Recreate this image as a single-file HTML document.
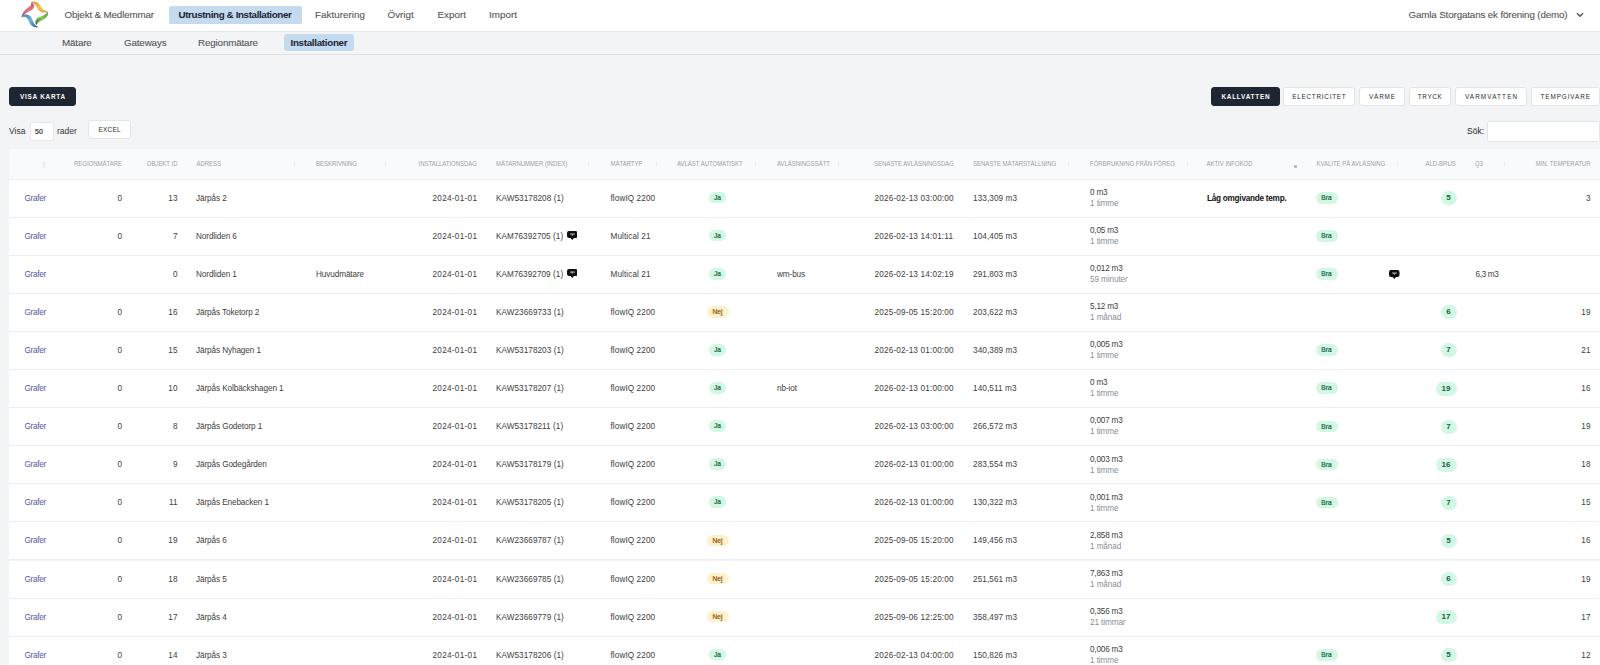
<!DOCTYPE html>
<html><head><meta charset="utf-8"><title>Installationer</title>
<style>
*{box-sizing:border-box;margin:0;padding:0}
html,body{width:1600px;height:665px;overflow:hidden;background:#f3f4f6;font-family:"Liberation Sans",sans-serif;color:#222}
.a{position:absolute;white-space:nowrap}
#top{position:absolute;left:0;top:0;width:1600px;height:32px;background:#fff;border-bottom:1px solid #e6e8eb}
#sub{position:absolute;left:0;top:32px;width:1600px;height:22.7px;background:#f3f4f6;border-bottom:1px solid #dfe2e6}
#subl{position:absolute;left:0;top:50.5px;width:1600px;height:1px;background:#f7f8f9}
.logo{position:absolute;left:16px;top:0px}
.nav{position:absolute;white-space:nowrap;font-size:9.8px;line-height:10px;color:#555;letter-spacing:-0.14px;-webkit-text-stroke:0.1px #555}
.pill{position:absolute;background:#c3daef;border-radius:2px}
.btn{position:absolute;height:19px;border-radius:3px;background:#fff;border:1px solid #e3e5e9;font-size:6.4px;line-height:17px;text-align:center;letter-spacing:0.9px;color:#2b2b2b;white-space:nowrap}
.btn.dk{background:#1e2533;border-color:#1e2533;color:#fff;font-weight:bold}
.lbl{position:absolute;white-space:nowrap;font-size:8.5px;line-height:10px;color:#333}
#thead{position:absolute;left:8.5px;top:149.0px;width:1600px;height:30.69999999999999px;background:#f9fafb;border-bottom:1px solid #eceef1}
.h{position:absolute;top:160.8px;white-space:nowrap;font-size:6px;line-height:7px;color:#9c9fa4;letter-spacing:-0.02px;transform:scaleY(1.2);transform-origin:0 50%}
.dv{position:absolute;top:160.5px;width:1px;height:6.5px;background:#eceef0}
.row{position:absolute;left:8.5px;width:1600px;height:38.08px;background:#fff;border-bottom:1px solid #eceef1}
.c{position:absolute;white-space:nowrap;font-size:8.2px;line-height:10px;color:#404040}
.c.dg{letter-spacing:0.35px}
.c.link{color:#5858a8}
.c.sub{color:#8a8f96}
.c.b{font-weight:bold;color:#111}
.bdg{position:absolute;height:11.5px;border-radius:6px;font-size:6.6px;line-height:11.5px;text-align:center;white-space:nowrap;-webkit-text-stroke:0.2px currentColor}
.bdg.g{background:#d3f7e5;color:#17603b}
.bdg.y{background:#fdf1c9;color:#8a4f12}
.bdg.n{height:14px;line-height:14px;border-radius:7px;font-size:8px;font-weight:bold;-webkit-text-stroke:0}
.ic{position:absolute}
.srt{position:absolute;top:160.5px;width:1.5px;height:7px;background:#ebedf0}
.srt2{position:absolute;top:165px;width:3px;height:3px;background:#b0b4ba;border-radius:1px}
</style></head><body>
<div id="top"></div>
<svg class="logo" width="36" height="31" viewBox="0 0 36 31">
<defs>
<linearGradient id="gr" x1="0" y1="1" x2="1" y2="0"><stop offset="0" stop-color="#a8455a"/><stop offset="0.5" stop-color="#e06a78"/><stop offset="1" stop-color="#c24a5c"/></linearGradient>
<linearGradient id="gy" x1="0" y1="0" x2="1" y2="1"><stop offset="0" stop-color="#d9883a"/><stop offset="0.5" stop-color="#f0c040"/><stop offset="1" stop-color="#e0902e"/></linearGradient>
<linearGradient id="gg" x1="1" y1="0" x2="0" y2="1"><stop offset="0" stop-color="#3f8f35"/><stop offset="0.5" stop-color="#7cc043"/><stop offset="1" stop-color="#1d6a28"/></linearGradient>
<linearGradient id="gb" x1="0" y1="0" x2="1" y2="1"><stop offset="0" stop-color="#3b6fa8"/><stop offset="0.5" stop-color="#5ab0de"/><stop offset="1" stop-color="#2a3f80"/></linearGradient>
</defs>
<g opacity="0.92">
<path d="M6.08 17.70 L6.88 16.40 L7.67 15.32 L8.49 14.41 L9.34 13.64 L10.21 12.99 L11.09 12.43 L11.98 11.92 L12.86 11.46 L13.73 11.02 L14.58 10.59 L15.40 10.13 L16.21 9.59 L16.86 8.98 L17.36 8.30 L17.71 7.56 L17.91 6.80 L17.97 6.04 L17.91 5.32 L17.74 4.63 L17.48 3.99 L17.13 3.42 L16.71 2.91 L16.22 2.50 L15.65 2.23 L15.15 2.57 L15.13 3.14 L15.11 3.63 L15.06 4.09 L14.98 4.51 L14.87 4.90 L14.74 5.23 L14.59 5.52 L14.43 5.76 L14.27 5.96 L14.12 6.12 L13.96 6.27 L13.79 6.41 L13.26 6.77 L12.56 7.24 L11.77 7.78 L10.90 8.40 L10.01 9.12 L9.11 9.95 L8.24 10.89 L7.43 11.96 L6.72 13.15 L6.13 14.47 L5.70 15.93 L5.52 17.50Z" fill="url(#gr)"/>
<path d="M15.39 2.60 L16.34 2.96 L17.14 3.30 L17.83 3.69 L18.42 4.11 L18.92 4.55 L19.36 5.02 L19.75 5.51 L20.10 6.03 L20.44 6.57 L20.76 7.15 L21.07 7.77 L21.42 8.51 L21.87 9.32 L22.43 10.09 L23.09 10.76 L23.82 11.34 L24.63 11.80 L25.49 12.15 L26.39 12.38 L27.33 12.52 L28.32 12.57 L29.35 12.55 L30.43 12.44 L31.58 12.20 L31.62 11.60 L30.56 11.18 L29.61 10.81 L28.77 10.45 L28.04 10.07 L27.43 9.69 L26.91 9.30 L26.49 8.92 L26.13 8.54 L25.83 8.14 L25.54 7.72 L25.27 7.26 L24.98 6.69 L24.59 5.91 L24.08 5.09 L23.49 4.33 L22.83 3.63 L22.08 3.00 L21.27 2.48 L20.38 2.06 L19.45 1.77 L18.47 1.61 L17.46 1.58 L16.44 1.69 L15.41 2.00Z" fill="url(#gy)"/>
<path d="M31.51 12.12 L30.94 12.94 L30.39 13.59 L29.81 14.12 L29.20 14.56 L28.56 14.94 L27.88 15.28 L27.16 15.60 L26.42 15.90 L25.64 16.20 L24.83 16.51 L24.02 16.83 L23.15 17.19 L22.36 17.61 L21.63 18.10 L20.98 18.67 L20.43 19.29 L19.99 19.97 L19.65 20.69 L19.44 21.43 L19.36 22.19 L19.41 22.92 L19.57 23.63 L19.86 24.29 L20.31 24.86 L20.89 24.74 L21.12 24.13 L21.33 23.63 L21.56 23.20 L21.83 22.85 L22.10 22.55 L22.40 22.29 L22.71 22.04 L23.05 21.81 L23.42 21.57 L23.84 21.32 L24.31 21.07 L24.85 20.81 L25.61 20.47 L26.43 20.07 L27.28 19.62 L28.12 19.11 L28.94 18.53 L29.72 17.87 L30.44 17.13 L31.07 16.30 L31.58 15.39 L31.94 14.40 L32.14 13.36 L32.09 12.28Z" fill="url(#gg)"/>
<path d="M6.12 16.87 L7.09 16.81 L7.93 16.82 L8.67 16.93 L9.32 17.12 L9.90 17.37 L10.39 17.67 L10.82 18.01 L11.20 18.39 L11.53 18.80 L11.83 19.24 L12.09 19.73 L12.34 20.33 L12.64 21.17 L13.07 22.11 L13.59 23.02 L14.19 23.91 L14.88 24.73 L15.66 25.48 L16.53 26.14 L17.48 26.68 L18.49 27.08 L19.56 27.32 L20.66 27.38 L21.76 27.20 L21.84 26.60 L20.92 26.14 L20.15 25.67 L19.50 25.15 L18.94 24.58 L18.45 23.98 L18.01 23.34 L17.62 22.67 L17.26 21.97 L16.93 21.24 L16.63 20.50 L16.36 19.74 L16.06 18.87 L15.62 17.89 L15.01 16.97 L14.28 16.18 L13.44 15.52 L12.51 15.03 L11.53 14.70 L10.52 14.55 L9.51 14.57 L8.51 14.76 L7.55 15.11 L6.66 15.62 L5.88 16.33Z" fill="url(#gb)"/>
</g>
</svg>
<div class="nav" style="left:64.5px;top:9.7px">Objekt &amp; Medlemmar</div>
<div class="pill" style="left:169px;top:6.4px;width:132.5px;height:17.2px"></div>
<div class="nav" style="left:178.5px;top:9.7px;color:#1a2233;font-weight:bold;-webkit-text-stroke:0;letter-spacing:-0.375px">Utrustning &amp; Installationer</div>
<div class="nav" style="left:315px;top:9.7px;letter-spacing:0.03px">Fakturering</div>
<div class="nav" style="left:387.5px;top:9.7px;letter-spacing:0.03px">Övrigt</div>
<div class="nav" style="left:437.5px;top:9.7px;letter-spacing:0.03px">Export</div>
<div class="nav" style="left:489px;top:9.7px;letter-spacing:0.03px">Import</div>
<div class="nav" style="right:32.5px;top:9.7px">Gamla Storgatans ek förening (demo)</div>
<svg class="a" style="left:1575.5px;top:12px" width="8" height="6" viewBox="0 0 8 6"><path d="M1 1.2L4 4.2L7 1.2" stroke="#555" stroke-width="1.4" fill="none"/></svg>
<div id="sub"></div><div id="subl"></div>
<div class="nav" style="left:62px;top:38.2px">Mätare</div>
<div class="nav" style="left:124px;top:38.2px">Gateways</div>
<div class="nav" style="left:198px;top:38.2px">Regionmätare</div>
<div class="pill" style="left:283.5px;top:34px;width:70px;height:17px;border-radius:3px"></div>
<div class="nav" style="left:290.5px;top:38.2px;color:#1a2233;font-weight:bold;-webkit-text-stroke:0;letter-spacing:-0.3px">Installationer</div>

<div class="btn dk" style="left:9px;top:87px;width:67px;letter-spacing:0.75px;text-indent:0.75px">VISA KARTA</div>
<div class="btn dk" style="left:1211px;top:87px;width:69px;letter-spacing:0.78px;text-indent:0.78px">KALLVATTEN</div>
<div class="btn" style="left:1283px;top:87px;width:72px;letter-spacing:0.74px;text-indent:0.74px">ELECTRICITET</div>
<div class="btn" style="left:1359px;top:87px;width:46px;letter-spacing:0.85px;text-indent:0.85px">VÄRME</div>
<div class="btn" style="left:1408.5px;top:87px;width:42.5px;letter-spacing:0.58px;text-indent:0.58px">TRYCK</div>
<div class="btn" style="left:1455px;top:87px;width:72px;letter-spacing:1.11px;text-indent:1.11px">VARMVATTEN</div>
<div class="btn" style="left:1530.5px;top:87px;width:69.5px;letter-spacing:0.88px;text-indent:0.88px">TEMPGIVARE</div>

<div class="lbl" style="left:9px;top:125.5px">Visa</div>
<div class="a" style="left:29.5px;top:121.5px;width:24.5px;height:19px;background:#fff;border:1px solid #e6e8eb;border-radius:3px;font-size:7px;line-height:17px;padding-left:4.5px;color:#333;-webkit-text-stroke:0.2px #333">50</div>
<div class="lbl" style="left:57px;top:125.5px">rader</div>
<div class="btn" style="left:88px;top:120px;width:43px;letter-spacing:0.28px;text-indent:0.28px">EXCEL</div>
<div class="lbl" style="left:1467px;top:125.5px;color:#222">Sök:</div>
<div class="a" style="left:1486.5px;top:121px;width:113px;height:20.5px;background:#fff;border:1px solid #e3e5e9;border-radius:2px"></div>

<div id="thead"></div>
<div class="h" style="right:1478px">REGIONMÄTARE</div><div class="h" style="right:1422.5px">OBJEKT ID</div><div class="h" style="left:196.5px">ADRESS</div><div class="h" style="left:316px">BESKRIVNING</div><div class="h" style="right:1123px">INSTALLATIONSDAG</div><div class="h" style="left:496px">MÄTARNUMMER (INDEX)</div><div class="h" style="left:610.5px">MÄTARTYP</div><div class="h" style="left:677px">AVLÄST AUTOMATISKT</div><div class="h" style="left:777px">AVLÄSNINGSSÄTT</div><div class="h" style="left:874px">SENASTE AVLÄSNINGSDAG</div><div class="h" style="left:973px">SENASTE MÄTARSTÄLLNING</div><div class="h" style="left:1090px">FÖRBRUKNING FRÅN FÖREG</div><div class="h" style="left:1206.5px">AKTIV INFOKOD</div><div class="h" style="left:1316.5px">KVALITE PÅ AVLÄSNING</div><div class="h" style="left:1425.5px">ALD-BRUS</div><div class="h" style="left:1475px">Q3</div><div class="h" style="right:9.5px">MIN. TEMPERATUR</div><div class="dv" style="left:293.5px"></div><div class="dv" style="left:384.5px"></div><div class="dv" style="left:588.0px"></div><div class="dv" style="left:655.5px"></div><div class="dv" style="left:754.5px"></div><div class="dv" style="left:837.5px"></div><div class="dv" style="left:1068.0px"></div><div class="dv" style="left:1187.0px"></div><div class="dv" style="left:1396.5px"></div><div class="dv" style="left:1504.0px"></div><div class="srt" style="left:43px"></div><div class="srt2" style="left:1293.5px"></div>
<div class="row" style="top:179.70px"></div>
<div class="c link" style="left:24.5px;top:193.74px;letter-spacing:-0.3px">Grafer</div>
<div class="c" style="right:1477.95px;top:193.74px;letter-spacing:0.05px">0</div>
<div class="c" style="right:1422.45px;top:193.74px;letter-spacing:0.05px">13</div>
<div class="c" style="left:196px;top:193.74px;letter-spacing:-0.1px">Järpås 2</div>
<div class="c" style="right:1122.70px;top:193.74px;letter-spacing:0.3px">2024-01-01</div>
<div class="c" style="left:496px;top:193.74px;letter-spacing:0.05px">KAW53178208 (1)</div>
<div class="c" style="left:610.5px;top:193.74px;letter-spacing:0.09px">flowIQ 2200</div>
<div class="bdg g" style="left:709px;top:191.84px;width:17px">Ja</div>
<div class="c" style="left:874.5px;top:193.74px;letter-spacing:0.17px">2026-02-13 03:00:00</div>
<div class="c" style="left:973px;top:193.74px;letter-spacing:0.09px">133,309 m3</div>
<div class="c" style="left:1090px;top:187.94px;letter-spacing:-0.2px">0 m3</div>
<div class="c sub" style="left:1090px;top:198.94px;letter-spacing:-0.1px">1 timme</div>
<div class="c b" style="left:1207px;top:193.74px;letter-spacing:-0.25px">Låg omgivande temp.</div>
<div class="bdg g" style="left:1315.5px;top:192.04px;width:22px">Bra</div>
<div class="bdg g n" style="left:1440.5px;top:191.14px;width:16px">5</div>
<div class="c" style="right:9.45px;top:193.74px;letter-spacing:0.05px">3</div><div class="row" style="top:217.78px"></div>
<div class="c link" style="left:24.5px;top:231.82px;letter-spacing:-0.3px">Grafer</div>
<div class="c" style="right:1477.95px;top:231.82px;letter-spacing:0.05px">0</div>
<div class="c" style="right:1422.45px;top:231.82px;letter-spacing:0.05px">7</div>
<div class="c" style="left:196px;top:231.82px;letter-spacing:-0.1px">Nordliden 6</div>
<div class="c" style="right:1122.70px;top:231.82px;letter-spacing:0.3px">2024-01-01</div>
<div class="c" style="left:496px;top:231.82px;letter-spacing:0.05px">KAM76392705 (1)</div>
<svg class="ic" style="left:566.5px;top:231.02px" width="10.5" height="9" viewBox="0 0 10.5 9"><path d="M2 0H8.5A2 2 0 0 1 10.5 2V5A2 2 0 0 1 8.5 7H7L5.25 9L3.5 7H2A2 2 0 0 1 0 5V2A2 2 0 0 1 2 0Z" fill="#111"/><rect x="3.2" y="2.6" width="4.6" height="0.9" fill="#e8e8e8"/><rect x="4.8" y="3.5" width="0.9" height="1.1" fill="#e8e8e8"/></svg>
<div class="c" style="left:610.5px;top:231.82px;letter-spacing:0.09px">Multical 21</div>
<div class="bdg g" style="left:709px;top:229.92px;width:17px">Ja</div>
<div class="c" style="left:874.5px;top:231.82px;letter-spacing:0.17px">2026-02-13 14:01:11</div>
<div class="c" style="left:973px;top:231.82px;letter-spacing:0.09px">104,405 m3</div>
<div class="c" style="left:1090px;top:226.02px;letter-spacing:-0.2px">0,05 m3</div>
<div class="c sub" style="left:1090px;top:237.02px;letter-spacing:-0.1px">1 timme</div>
<div class="bdg g" style="left:1315.5px;top:230.12px;width:22px">Bra</div><div class="row" style="top:255.86px"></div>
<div class="c link" style="left:24.5px;top:269.90px;letter-spacing:-0.3px">Grafer</div>
<div class="c" style="right:1422.45px;top:269.90px;letter-spacing:0.05px">0</div>
<div class="c" style="left:196px;top:269.90px;letter-spacing:-0.1px">Nordliden 1</div>
<div class="c" style="left:316px;top:269.90px;letter-spacing:-0.1px">Huvudmätare</div>
<div class="c" style="right:1122.70px;top:269.90px;letter-spacing:0.3px">2024-01-01</div>
<div class="c" style="left:496px;top:269.90px;letter-spacing:0.05px">KAM76392709 (1)</div>
<svg class="ic" style="left:566.5px;top:269.1px" width="10.5" height="9" viewBox="0 0 10.5 9"><path d="M2 0H8.5A2 2 0 0 1 10.5 2V5A2 2 0 0 1 8.5 7H7L5.25 9L3.5 7H2A2 2 0 0 1 0 5V2A2 2 0 0 1 2 0Z" fill="#111"/><rect x="3.2" y="2.6" width="4.6" height="0.9" fill="#e8e8e8"/><rect x="4.8" y="3.5" width="0.9" height="1.1" fill="#e8e8e8"/></svg>
<div class="c" style="left:610.5px;top:269.90px;letter-spacing:0.09px">Multical 21</div>
<div class="bdg g" style="left:709px;top:268.00px;width:17px">Ja</div>
<div class="c" style="left:777px;top:269.90px;letter-spacing:-0.1px">wm-bus</div>
<div class="c" style="left:874.5px;top:269.90px;letter-spacing:0.17px">2026-02-13 14:02:19</div>
<div class="c" style="left:973px;top:269.90px;letter-spacing:0.09px">291,803 m3</div>
<div class="c" style="left:1090px;top:264.10px;letter-spacing:-0.2px">0,012 m3</div>
<div class="c sub" style="left:1090px;top:275.10px;letter-spacing:-0.1px">59 minuter</div>
<div class="bdg g" style="left:1315.5px;top:268.20px;width:22px">Bra</div>
<svg class="ic" style="left:1389px;top:270.4px" width="10.5" height="9" viewBox="0 0 10.5 9"><path d="M2 0H8.5A2 2 0 0 1 10.5 2V5A2 2 0 0 1 8.5 7H7L5.25 9L3.5 7H2A2 2 0 0 1 0 5V2A2 2 0 0 1 2 0Z" fill="#111"/><rect x="3.2" y="2.6" width="4.6" height="0.9" fill="#e8e8e8"/><rect x="4.8" y="3.5" width="0.9" height="1.1" fill="#e8e8e8"/></svg>
<div class="c" style="left:1475.5px;top:269.90px;letter-spacing:-0.33px">6,3 m3</div><div class="row" style="top:293.94px"></div>
<div class="c link" style="left:24.5px;top:307.98px;letter-spacing:-0.3px">Grafer</div>
<div class="c" style="right:1477.95px;top:307.98px;letter-spacing:0.05px">0</div>
<div class="c" style="right:1422.45px;top:307.98px;letter-spacing:0.05px">16</div>
<div class="c" style="left:196px;top:307.98px;letter-spacing:-0.1px">Järpås Toketorp 2</div>
<div class="c" style="right:1122.70px;top:307.98px;letter-spacing:0.3px">2024-01-01</div>
<div class="c" style="left:496px;top:307.98px;letter-spacing:0.05px">KAW23669733 (1)</div>
<div class="c" style="left:610.5px;top:307.98px;letter-spacing:0.09px">flowIQ 2200</div>
<div class="bdg y" style="left:706.5px;top:306.08px;width:22px">Nej</div>
<div class="c" style="left:874.5px;top:307.98px;letter-spacing:0.17px">2025-09-05 15:20:00</div>
<div class="c" style="left:973px;top:307.98px;letter-spacing:0.09px">203,622 m3</div>
<div class="c" style="left:1090px;top:302.18px;letter-spacing:-0.2px">5,12 m3</div>
<div class="c sub" style="left:1090px;top:313.18px;letter-spacing:-0.1px">1 månad</div>
<div class="bdg g n" style="left:1440.5px;top:305.38px;width:16px">6</div>
<div class="c" style="right:9.45px;top:307.98px;letter-spacing:0.05px">19</div><div class="row" style="top:332.02px"></div>
<div class="c link" style="left:24.5px;top:346.06px;letter-spacing:-0.3px">Grafer</div>
<div class="c" style="right:1477.95px;top:346.06px;letter-spacing:0.05px">0</div>
<div class="c" style="right:1422.45px;top:346.06px;letter-spacing:0.05px">15</div>
<div class="c" style="left:196px;top:346.06px;letter-spacing:-0.1px">Järpås Nyhagen 1</div>
<div class="c" style="right:1122.70px;top:346.06px;letter-spacing:0.3px">2024-01-01</div>
<div class="c" style="left:496px;top:346.06px;letter-spacing:0.05px">KAW53178203 (1)</div>
<div class="c" style="left:610.5px;top:346.06px;letter-spacing:0.09px">flowIQ 2200</div>
<div class="bdg g" style="left:709px;top:344.16px;width:17px">Ja</div>
<div class="c" style="left:874.5px;top:346.06px;letter-spacing:0.17px">2026-02-13 01:00:00</div>
<div class="c" style="left:973px;top:346.06px;letter-spacing:0.09px">340,389 m3</div>
<div class="c" style="left:1090px;top:340.26px;letter-spacing:-0.2px">0,005 m3</div>
<div class="c sub" style="left:1090px;top:351.26px;letter-spacing:-0.1px">1 timme</div>
<div class="bdg g" style="left:1315.5px;top:344.36px;width:22px">Bra</div>
<div class="bdg g n" style="left:1440.5px;top:343.46px;width:16px">7</div>
<div class="c" style="right:9.45px;top:346.06px;letter-spacing:0.05px">21</div><div class="row" style="top:370.10px"></div>
<div class="c link" style="left:24.5px;top:384.14px;letter-spacing:-0.3px">Grafer</div>
<div class="c" style="right:1477.95px;top:384.14px;letter-spacing:0.05px">0</div>
<div class="c" style="right:1422.45px;top:384.14px;letter-spacing:0.05px">10</div>
<div class="c" style="left:196px;top:384.14px;letter-spacing:-0.1px">Järpås Kolbäckshagen 1</div>
<div class="c" style="right:1122.70px;top:384.14px;letter-spacing:0.3px">2024-01-01</div>
<div class="c" style="left:496px;top:384.14px;letter-spacing:0.05px">KAW53178207 (1)</div>
<div class="c" style="left:610.5px;top:384.14px;letter-spacing:0.09px">flowIQ 2200</div>
<div class="bdg g" style="left:709px;top:382.24px;width:17px">Ja</div>
<div class="c" style="left:777px;top:384.14px;letter-spacing:-0.1px">nb-iot</div>
<div class="c" style="left:874.5px;top:384.14px;letter-spacing:0.17px">2026-02-13 01:00:00</div>
<div class="c" style="left:973px;top:384.14px;letter-spacing:0.09px">140,511 m3</div>
<div class="c" style="left:1090px;top:378.34px;letter-spacing:-0.2px">0 m3</div>
<div class="c sub" style="left:1090px;top:389.34px;letter-spacing:-0.1px">1 timme</div>
<div class="bdg g" style="left:1315.5px;top:382.44px;width:22px">Bra</div>
<div class="bdg g n" style="left:1435.5px;top:381.54px;width:21px">19</div>
<div class="c" style="right:9.45px;top:384.14px;letter-spacing:0.05px">16</div><div class="row" style="top:408.18px"></div>
<div class="c link" style="left:24.5px;top:422.22px;letter-spacing:-0.3px">Grafer</div>
<div class="c" style="right:1477.95px;top:422.22px;letter-spacing:0.05px">0</div>
<div class="c" style="right:1422.45px;top:422.22px;letter-spacing:0.05px">8</div>
<div class="c" style="left:196px;top:422.22px;letter-spacing:-0.1px">Järpås Godetorp 1</div>
<div class="c" style="right:1122.70px;top:422.22px;letter-spacing:0.3px">2024-01-01</div>
<div class="c" style="left:496px;top:422.22px;letter-spacing:0.05px">KAW53178211 (1)</div>
<div class="c" style="left:610.5px;top:422.22px;letter-spacing:0.09px">flowIQ 2200</div>
<div class="bdg g" style="left:709px;top:420.32px;width:17px">Ja</div>
<div class="c" style="left:874.5px;top:422.22px;letter-spacing:0.17px">2026-02-13 03:00:00</div>
<div class="c" style="left:973px;top:422.22px;letter-spacing:0.09px">266,572 m3</div>
<div class="c" style="left:1090px;top:416.42px;letter-spacing:-0.2px">0,007 m3</div>
<div class="c sub" style="left:1090px;top:427.42px;letter-spacing:-0.1px">1 timme</div>
<div class="bdg g" style="left:1315.5px;top:420.52px;width:22px">Bra</div>
<div class="bdg g n" style="left:1440.5px;top:419.62px;width:16px">7</div>
<div class="c" style="right:9.45px;top:422.22px;letter-spacing:0.05px">19</div><div class="row" style="top:446.26px"></div>
<div class="c link" style="left:24.5px;top:460.30px;letter-spacing:-0.3px">Grafer</div>
<div class="c" style="right:1477.95px;top:460.30px;letter-spacing:0.05px">0</div>
<div class="c" style="right:1422.45px;top:460.30px;letter-spacing:0.05px">9</div>
<div class="c" style="left:196px;top:460.30px;letter-spacing:-0.1px">Järpås Godegården</div>
<div class="c" style="right:1122.70px;top:460.30px;letter-spacing:0.3px">2024-01-01</div>
<div class="c" style="left:496px;top:460.30px;letter-spacing:0.05px">KAW53178179 (1)</div>
<div class="c" style="left:610.5px;top:460.30px;letter-spacing:0.09px">flowIQ 2200</div>
<div class="bdg g" style="left:709px;top:458.40px;width:17px">Ja</div>
<div class="c" style="left:874.5px;top:460.30px;letter-spacing:0.17px">2026-02-13 01:00:00</div>
<div class="c" style="left:973px;top:460.30px;letter-spacing:0.09px">283,554 m3</div>
<div class="c" style="left:1090px;top:454.50px;letter-spacing:-0.2px">0,003 m3</div>
<div class="c sub" style="left:1090px;top:465.50px;letter-spacing:-0.1px">1 timme</div>
<div class="bdg g" style="left:1315.5px;top:458.60px;width:22px">Bra</div>
<div class="bdg g n" style="left:1435.5px;top:457.70px;width:21px">16</div>
<div class="c" style="right:9.45px;top:460.30px;letter-spacing:0.05px">18</div><div class="row" style="top:484.34px"></div>
<div class="c link" style="left:24.5px;top:498.38px;letter-spacing:-0.3px">Grafer</div>
<div class="c" style="right:1477.95px;top:498.38px;letter-spacing:0.05px">0</div>
<div class="c" style="right:1422.45px;top:498.38px;letter-spacing:0.05px">11</div>
<div class="c" style="left:196px;top:498.38px;letter-spacing:-0.1px">Järpås Enebacken 1</div>
<div class="c" style="right:1122.70px;top:498.38px;letter-spacing:0.3px">2024-01-01</div>
<div class="c" style="left:496px;top:498.38px;letter-spacing:0.05px">KAW53178205 (1)</div>
<div class="c" style="left:610.5px;top:498.38px;letter-spacing:0.09px">flowIQ 2200</div>
<div class="bdg g" style="left:709px;top:496.48px;width:17px">Ja</div>
<div class="c" style="left:874.5px;top:498.38px;letter-spacing:0.17px">2026-02-13 01:00:00</div>
<div class="c" style="left:973px;top:498.38px;letter-spacing:0.09px">130,322 m3</div>
<div class="c" style="left:1090px;top:492.58px;letter-spacing:-0.2px">0,001 m3</div>
<div class="c sub" style="left:1090px;top:503.58px;letter-spacing:-0.1px">1 timme</div>
<div class="bdg g" style="left:1315.5px;top:496.68px;width:22px">Bra</div>
<div class="bdg g n" style="left:1440.5px;top:495.78px;width:16px">7</div>
<div class="c" style="right:9.45px;top:498.38px;letter-spacing:0.05px">15</div><div class="row" style="top:522.42px"></div>
<div class="c link" style="left:24.5px;top:536.46px;letter-spacing:-0.3px">Grafer</div>
<div class="c" style="right:1477.95px;top:536.46px;letter-spacing:0.05px">0</div>
<div class="c" style="right:1422.45px;top:536.46px;letter-spacing:0.05px">19</div>
<div class="c" style="left:196px;top:536.46px;letter-spacing:-0.1px">Järpås 6</div>
<div class="c" style="right:1122.70px;top:536.46px;letter-spacing:0.3px">2024-01-01</div>
<div class="c" style="left:496px;top:536.46px;letter-spacing:0.05px">KAW23669787 (1)</div>
<div class="c" style="left:610.5px;top:536.46px;letter-spacing:0.09px">flowIQ 2200</div>
<div class="bdg y" style="left:706.5px;top:534.56px;width:22px">Nej</div>
<div class="c" style="left:874.5px;top:536.46px;letter-spacing:0.17px">2025-09-05 15:20:00</div>
<div class="c" style="left:973px;top:536.46px;letter-spacing:0.09px">149,456 m3</div>
<div class="c" style="left:1090px;top:530.66px;letter-spacing:-0.2px">2,858 m3</div>
<div class="c sub" style="left:1090px;top:541.66px;letter-spacing:-0.1px">1 månad</div>
<div class="bdg g n" style="left:1440.5px;top:533.86px;width:16px">5</div>
<div class="c" style="right:9.45px;top:536.46px;letter-spacing:0.05px">16</div><div class="row" style="top:560.50px"></div>
<div class="c link" style="left:24.5px;top:574.54px;letter-spacing:-0.3px">Grafer</div>
<div class="c" style="right:1477.95px;top:574.54px;letter-spacing:0.05px">0</div>
<div class="c" style="right:1422.45px;top:574.54px;letter-spacing:0.05px">18</div>
<div class="c" style="left:196px;top:574.54px;letter-spacing:-0.1px">Järpås 5</div>
<div class="c" style="right:1122.70px;top:574.54px;letter-spacing:0.3px">2024-01-01</div>
<div class="c" style="left:496px;top:574.54px;letter-spacing:0.05px">KAW23669785 (1)</div>
<div class="c" style="left:610.5px;top:574.54px;letter-spacing:0.09px">flowIQ 2200</div>
<div class="bdg y" style="left:706.5px;top:572.64px;width:22px">Nej</div>
<div class="c" style="left:874.5px;top:574.54px;letter-spacing:0.17px">2025-09-05 15:20:00</div>
<div class="c" style="left:973px;top:574.54px;letter-spacing:0.09px">251,561 m3</div>
<div class="c" style="left:1090px;top:568.74px;letter-spacing:-0.2px">7,863 m3</div>
<div class="c sub" style="left:1090px;top:579.74px;letter-spacing:-0.1px">1 månad</div>
<div class="bdg g n" style="left:1440.5px;top:571.94px;width:16px">6</div>
<div class="c" style="right:9.45px;top:574.54px;letter-spacing:0.05px">19</div><div class="row" style="top:598.58px"></div>
<div class="c link" style="left:24.5px;top:612.62px;letter-spacing:-0.3px">Grafer</div>
<div class="c" style="right:1477.95px;top:612.62px;letter-spacing:0.05px">0</div>
<div class="c" style="right:1422.45px;top:612.62px;letter-spacing:0.05px">17</div>
<div class="c" style="left:196px;top:612.62px;letter-spacing:-0.1px">Järpås 4</div>
<div class="c" style="right:1122.70px;top:612.62px;letter-spacing:0.3px">2024-01-01</div>
<div class="c" style="left:496px;top:612.62px;letter-spacing:0.05px">KAW23669779 (1)</div>
<div class="c" style="left:610.5px;top:612.62px;letter-spacing:0.09px">flowIQ 2200</div>
<div class="bdg y" style="left:706.5px;top:610.72px;width:22px">Nej</div>
<div class="c" style="left:874.5px;top:612.62px;letter-spacing:0.17px">2025-09-06 12:25:00</div>
<div class="c" style="left:973px;top:612.62px;letter-spacing:0.09px">358,497 m3</div>
<div class="c" style="left:1090px;top:606.82px;letter-spacing:-0.2px">0,356 m3</div>
<div class="c sub" style="left:1090px;top:617.82px;letter-spacing:-0.1px">21 timmar</div>
<div class="bdg g n" style="left:1435.5px;top:610.02px;width:21px">17</div>
<div class="c" style="right:9.45px;top:612.62px;letter-spacing:0.05px">17</div><div class="row" style="top:636.66px"></div>
<div class="c link" style="left:24.5px;top:650.70px;letter-spacing:-0.3px">Grafer</div>
<div class="c" style="right:1477.95px;top:650.70px;letter-spacing:0.05px">0</div>
<div class="c" style="right:1422.45px;top:650.70px;letter-spacing:0.05px">14</div>
<div class="c" style="left:196px;top:650.70px;letter-spacing:-0.1px">Järpås 3</div>
<div class="c" style="right:1122.70px;top:650.70px;letter-spacing:0.3px">2024-01-01</div>
<div class="c" style="left:496px;top:650.70px;letter-spacing:0.05px">KAW53178206 (1)</div>
<div class="c" style="left:610.5px;top:650.70px;letter-spacing:0.09px">flowIQ 2200</div>
<div class="bdg g" style="left:709px;top:648.80px;width:17px">Ja</div>
<div class="c" style="left:874.5px;top:650.70px;letter-spacing:0.17px">2026-02-13 04:00:00</div>
<div class="c" style="left:973px;top:650.70px;letter-spacing:0.09px">150,826 m3</div>
<div class="c" style="left:1090px;top:644.90px;letter-spacing:-0.2px">0,006 m3</div>
<div class="c sub" style="left:1090px;top:655.90px;letter-spacing:-0.1px">1 timme</div>
<div class="bdg g" style="left:1315.5px;top:649.00px;width:22px">Bra</div>
<div class="bdg g n" style="left:1440.5px;top:648.10px;width:16px">5</div>
<div class="c" style="right:9.45px;top:650.70px;letter-spacing:0.05px">12</div>
</body></html>
